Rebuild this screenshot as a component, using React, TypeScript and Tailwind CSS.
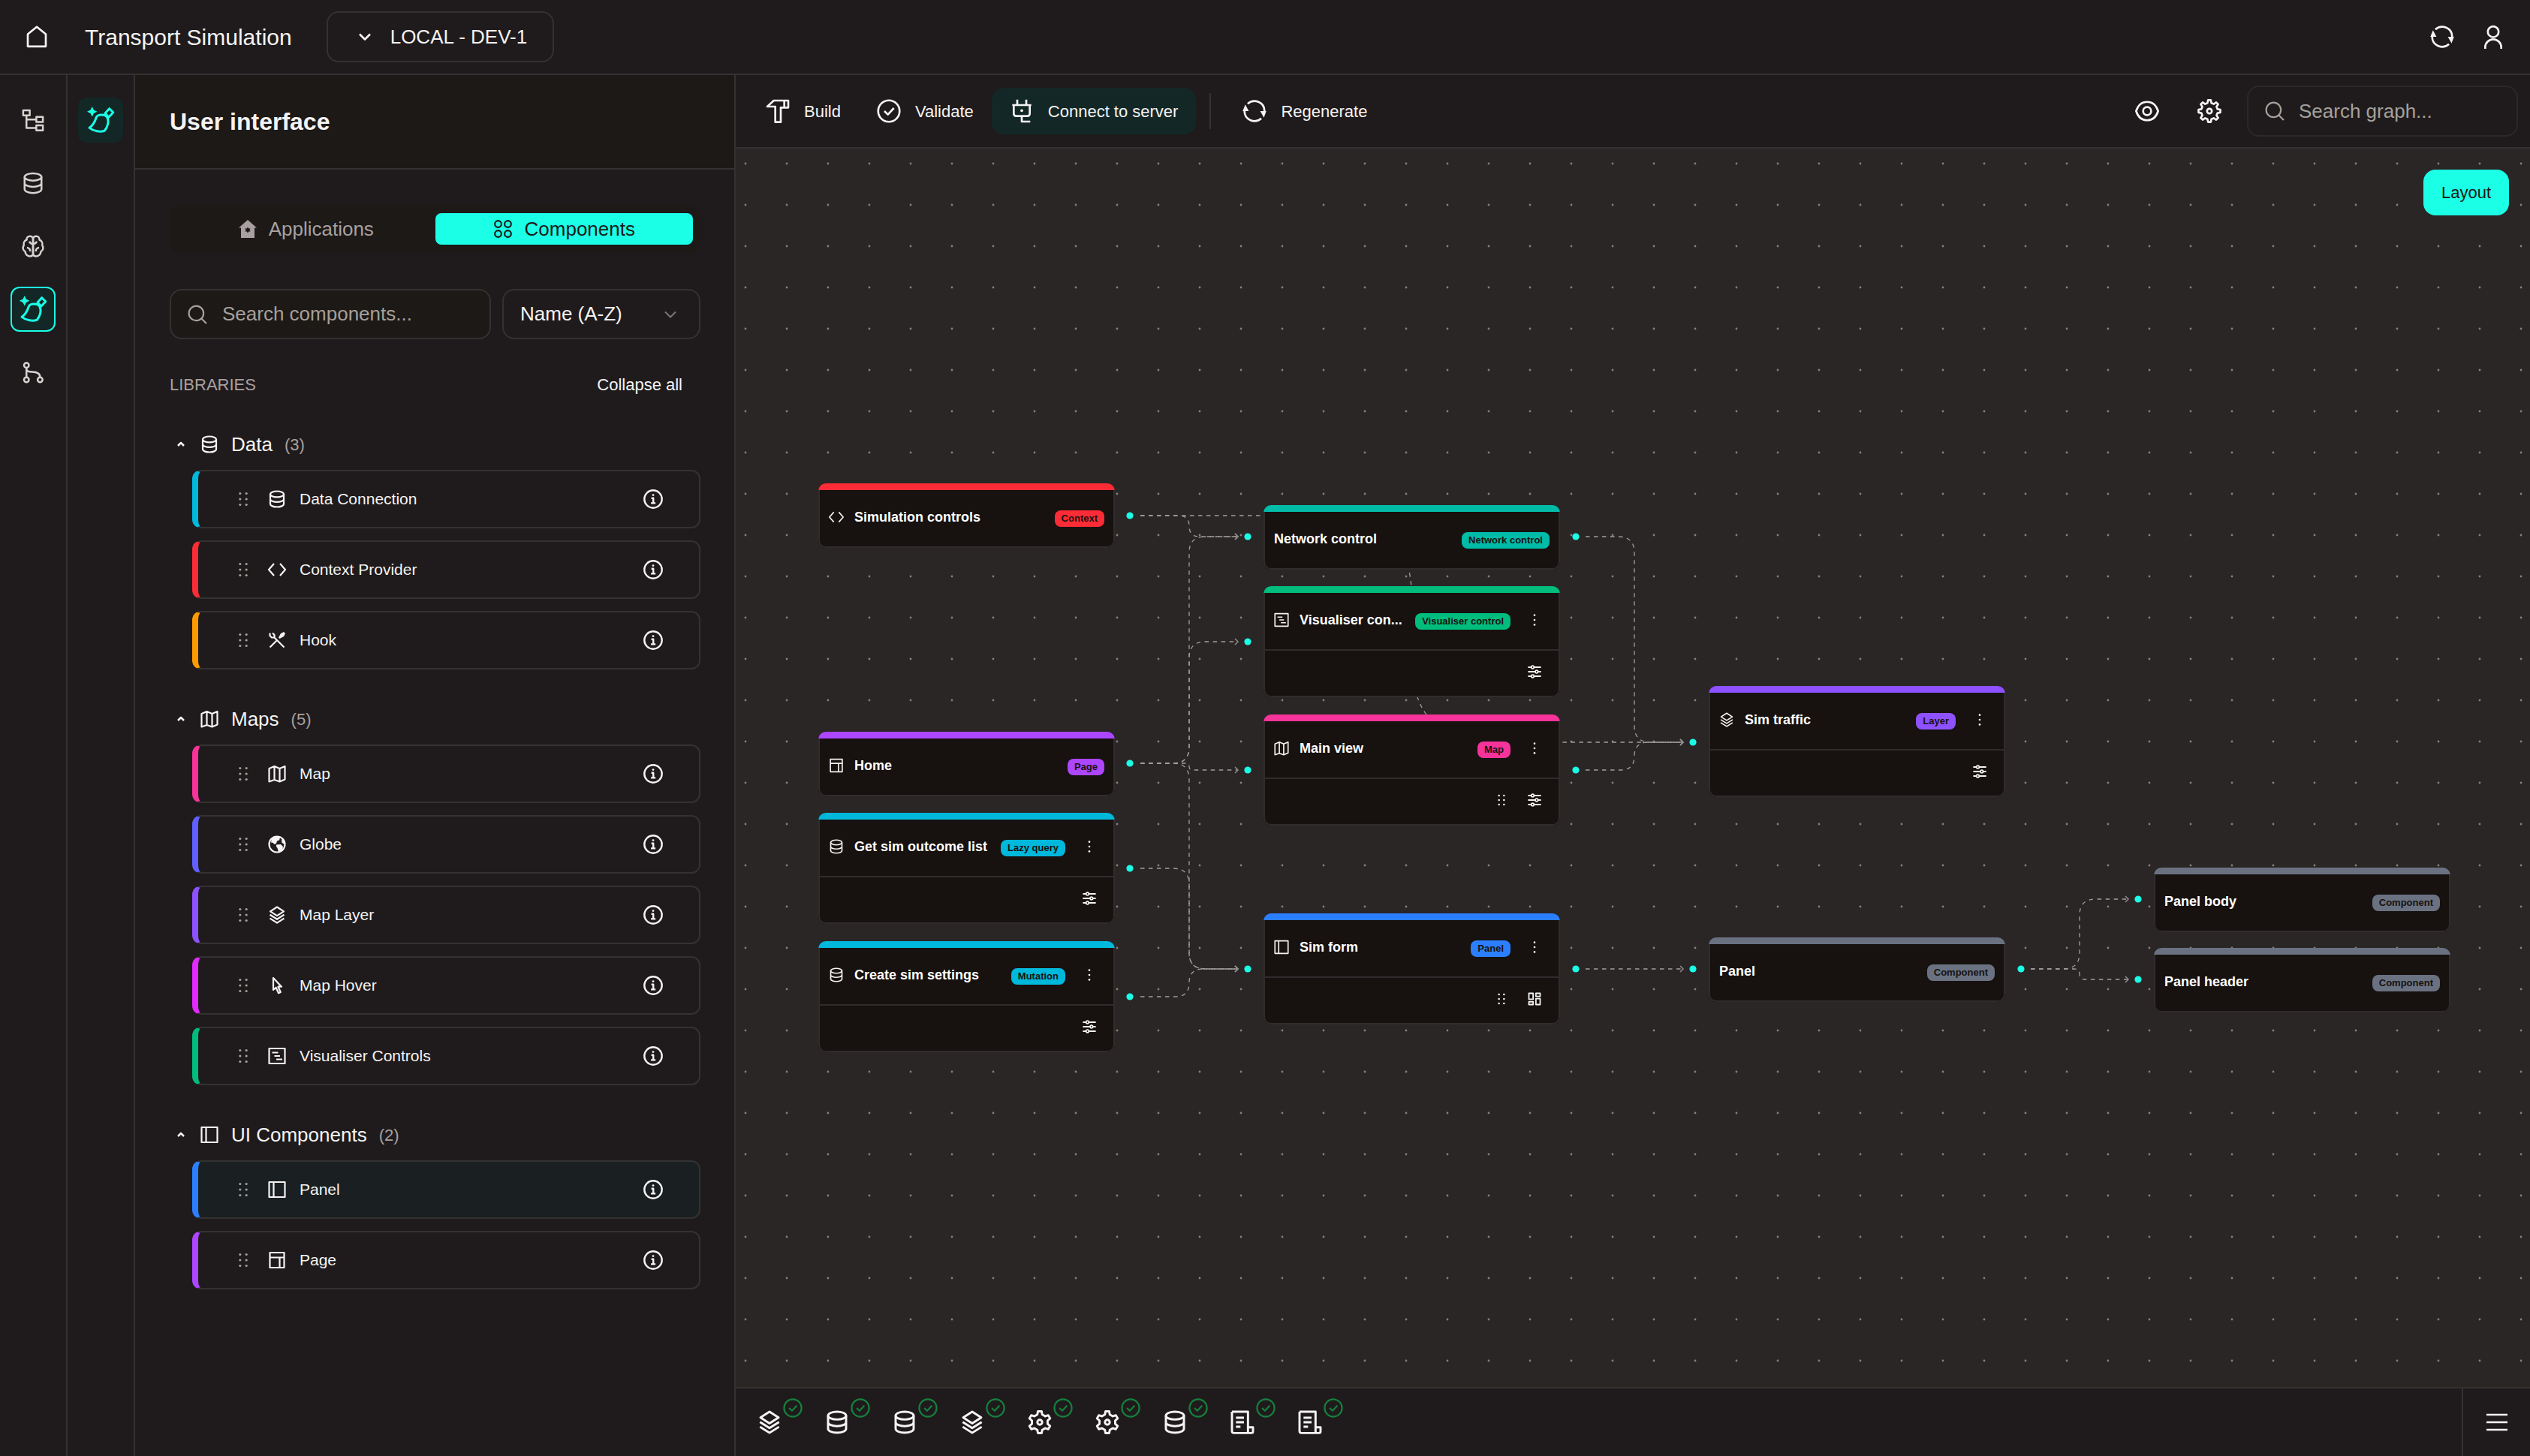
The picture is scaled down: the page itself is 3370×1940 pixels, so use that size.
import type { ReactNode } from "react";

// outline of a gear in a 24x24 box
function gearPath(teeth: number, outer: number, inner: number) {
  const step = (Math.PI * 2) / teeth;
  const at = (r: number, a: number) =>
    `${(12 + r * Math.sin(a)).toFixed(2)} ${(12 - r * Math.cos(a)).toFixed(2)}`;
  let d = "";
  for (let i = 0; i < teeth; i++) {
    const a = i * step;
    d += `${i === 0 ? "M" : "L"}${at(outer, a - step * 0.16)}`;
    d += `L${at(outer, a + step * 0.16)}L${at(inner, a + step * 0.3)}L${at(inner, a + step * 0.7)}`;
  }
  return d + "Z";
}

const brainHalf =
  "M12 4.5C12 2.500 13.500 1.300 15.300 1.300C17.500 1.300 19 3 18.800 5.200C21 6 22.500 8.300 21.800 11C23.500 13.500 22.800 16.500 20.300 17.800C20.300 20.800 18 22.700 15.500 22.700C13.500 22.700 12 21.500 12 19.500ZM12 9.500C14.200 9.500 15.500 8.500 15.800 6.800M15 17.500C15 15 16.500 13.800 18.500 13.500";

const icons = {
  home: <path d="M3 9.4 12 2l9 7.4V21.6H3Z" />,
  user: (
    <>
      <circle cx="12" cy="7" r="5.4" />
      <path d="M4 24v-1.500a8 8 0 0 1 16 0V24" />
    </>
  ),
  refresh: (
    <>
      <path d="M5.2 4.7A10 10 0 0 1 22 12M18.8 19.3A10 10 0 0 1 2 12" />
      <path d="M2.8 5.500 6.300 12H.2ZM21.4 18.500 17.700 12h6.100Z" fill="currentColor" stroke="none" />
    </>
  ),
  chevronDown: <path d="m5 8.5 7 7 7-7" />,
  chevronUp: <path d="m4 16 8-8 8 8" />,
  tree: <path d="M1.500 1.500h7v5.500h-7ZM15.500 8.500h7V14h-7ZM15.500 17.500h7V23h-7ZM5 7v13.300h10.500M5 11.300h10.500" />,
  brain: (
    <>
      <path d={brainHalf} />
      <path d={brainHalf} transform="matrix(-1 0 0 1 24 0)" />
    </>
  ),
  database: (
    <>
      <ellipse cx="12" cy="5.4" rx="9" ry="3.9" />
      <path d="M3 5.400v13.200c0 2.200 4 3.900 9 3.900s9-1.700 9-3.900V5.400M3 12c0 2.200 4 3.900 9 3.900s9-1.700 9-3.900" />
    </>
  ),
  brush: (
    <>
      <path d="M8.300 9.300C9.800 6.900 15.500 6.600 17.800 9.300c1.900 3.700.6 8.700-2.300 12.200C11.500 23 6 21.900 2 18.900c3-2 4.800-5 6.300-9.600ZM19.800 1.800l3.400 3.400-3.900 4.200-3.300-3.400Z" />
      <path d="M4.500 0 5.900 3 8.900 4.500 5.900 6 4.500 9 3 6 0 4.500 3 3Z" fill="currentColor" stroke="none" />
    </>
  ),
  git: (
    <>
      <circle cx="5" cy="4.500" r="2.600" />
      <circle cx="5" cy="20" r="2.600" />
      <circle cx="19.500" cy="20" r="2.600" />
      <path d="M5 7.100v10.300M5 8c0 3 2 3.500 6 3.500 5.500 0 8.500 1.500 8.500 5.900" />
    </>
  ),
  homeGear: (
    <path
      fillRule="evenodd"
      stroke="none"
      fill="currentColor"
      d="M12 0 24 10.500h-3V24H3V10.500H0ZM12 9.500l1.200 1.900 2.300-.1-1 2.100 1 2.100-2.300-.1L12 17.600l-1.200-2.200-2.300.1 1-2.100-1-2.100 2.300.1Z"
    />
  ),
  circles: (
    <>
      <circle cx="6" cy="6" r="4" />
      <circle cx="18" cy="6" r="4" />
      <circle cx="6" cy="18" r="4" />
      <circle cx="18" cy="18" r="4" />
    </>
  ),
  search: (
    <>
      <circle cx="10.500" cy="10.500" r="9" />
      <path d="m17 17 6 6" />
    </>
  ),
  code: <path d="M8 4 1 12l7 8M16 4l7 8-7 8" />,
  tools: (
    <>
      <path d="m8.500 8.500 13 13M2.500 2.500v3.500L5 8.500h3.500V5L6 2.500M2.500 21.500l9-9" />
      <path d="m14 8.500 3-5.500 4-2 2 2-2 4-5.500 3Z" fill="currentColor" stroke="none" />
    </>
  ),
  map: <path d="M1.500 5v17.500L8.500 20l7 2.500 7-3V2l-7 3-7-3ZM8.500 2v18M15.500 5v17.500" />,
  globe: (
    <>
      <circle cx="12" cy="12" r="10.500" />
      <path
        d="M5 4 12 1.500l4 1.500-1 3.500-3 1-1 3.500-3 1-1-2-3-.5ZM11 12.500l6-.5 3 3-1 5-5 2.500-1.500-5.500-1.500-2ZM18 5l3 2 1.500 5-4-2Z"
        fill="currentColor"
        stroke="none"
      />
    </>
  ),
  layers: (
    <path d="m12 1.500 9 5.800-9 5.800-9-5.800ZM2.500 11.800l9.500 6 9.500-6M2.500 16.600l9.500 6 9.500-6" />
  ),
  cursor: <path d="M7 2v16l3.600-3.300 3.400 7.500 2.800-1.200-3.300-7.300H18Z" />,
  visualiser: (
    <>
      <path d="M1.500 2h21v20h-21Z" />
      <path d="M5.500 7.500h8M8.500 12h7.500M11 16.500h8" />
    </>
  ),
  panel: <path d="M1.500 2h21v20h-21ZM7.500 2v20" />,
  page: <path d="M2.500 2h19v20h-19ZM2.500 8.500h19M15.500 8.500V22" />,
  info: (
    <>
      <circle cx="12" cy="12" r="10.800" />
      <path d="M9.800 10.800h2.400v6M9.300 17h5.600" />
      <circle cx="12" cy="7" r="1.300" fill="currentColor" stroke="none" />
    </>
  ),
  grip: (
    <g fill="currentColor" stroke="none">
      <circle cx="7" cy="3" r="1.900" />
      <circle cx="17" cy="3" r="1.900" />
      <circle cx="7" cy="12" r="1.900" />
      <circle cx="17" cy="12" r="1.900" />
      <circle cx="7" cy="21" r="1.900" />
      <circle cx="17" cy="21" r="1.900" />
    </g>
  ),
  more: (
    <g fill="currentColor" stroke="none">
      <circle cx="12" cy="3.500" r="1.800" />
      <circle cx="12" cy="12" r="1.800" />
      <circle cx="12" cy="20.500" r="1.800" />
    </g>
  ),
  sliders: (
    <>
      <path d="M.5 4H6M11.500 4h12M.5 12h12.500M18.500 12h5M.5 20H6M11.500 20h12" />
      <circle cx="8.700" cy="4" r="2.400" />
      <circle cx="15.700" cy="12" r="2.400" />
      <circle cx="8.700" cy="20" r="2.400" />
    </>
  ),
  blocks: (
    <path d="M2 2h7.500v10.500H2ZM14.500 2H22v5.500h-7.500ZM2 17h7.500v5H2ZM14.500 11.500H22V22h-7.500Z" />
  ),
  hammer: <path d="M1.500 7.500 8 1.500h14.500v7h-7.500V23H9.500V7.500ZM18.500 1.500v7" />,
  check: (
    <>
      <circle cx="12" cy="12" r="10.700" />
      <path d="m7.500 12 3.500 3.500 6-6.500" />
    </>
  ),
  plug: (
    <>
      <path d="M7.500.5V6M16.500.5V6M2.500 6h19M4 6v8.500c0 1.500 1 2.500 2.500 2.500h11c1.500 0 2.500-1 2.500-2.500V6M12 17v5.500h8.500" />
      <circle cx="12" cy="11.500" r="1.400" fill="currentColor" stroke="none" />
    </>
  ),
  eye: (
    <>
      <path d="M1 12C3 5.800 7 2.800 12 2.800S21 5.800 23 12c-2 6.200-6 9.200-11 9.200S3 18.200 1 12Z" />
      <circle cx="12" cy="12" r="4" />
    </>
  ),
  gear: (
    <>
      <path d={gearPath(8, 11, 8.300)} />
      <circle cx="12" cy="12" r="2.400" />
    </>
  ),
  cog: (
    <>
      <path d={gearPath(6, 11, 8)} />
      <circle cx="12" cy="12" r="2.400" />
    </>
  ),
  script: (
    <path d="M1.500 1.500h16V22c0 .6 0 .8.500.8h3c1 0 1.500-.8 1.500-1.800v-4h-5M18 22.800H3.500c-1.200 0-2-.8-2-2V1.500M5.500 7.500h8M5.500 12h8M5.500 16.500h4.500" />
  ),
  menu: <path d="M1.500 4.500h21M1.500 12h21M1.500 19.500h21" />,
};

type IconName = keyof typeof icons;

function Icon({
  name,
  className = "size-6",
  stroke = 2,
}: {
  name: IconName;
  className?: string;
  stroke?: number;
}) {
  return (
    <svg
      viewBox="0 0 24 24"
      className={`shrink-0 overflow-visible ${className}`}
      fill="none"
      stroke="currentColor"
      strokeWidth={stroke}
      strokeLinejoin="round"
      aria-hidden="true"
    >
      {icons[name]}
    </svg>
  );
}

interface LibraryItem {
  label: string;
  icon: IconName;
  accent: string;
  active?: boolean;
}

const libraries: { title: string; icon: IconName; items: LibraryItem[] }[] = [
  {
    title: "Data",
    icon: "database",
    items: [
      { label: "Data Connection", icon: "database", accent: "border-l-[#00b8db]" },
      { label: "Context Provider", icon: "code", accent: "border-l-[#fb2c36]" },
      { label: "Hook", icon: "tools", accent: "border-l-[#fe9a00]" },
    ],
  },
  {
    title: "Maps",
    icon: "map",
    items: [
      { label: "Map", icon: "map", accent: "border-l-[#f6339a]" },
      { label: "Globe", icon: "globe", accent: "border-l-[#615fff]" },
      { label: "Map Layer", icon: "layers", accent: "border-l-[#8e51ff]" },
      { label: "Map Hover", icon: "cursor", accent: "border-l-[#e12afb]" },
      { label: "Visualiser Controls", icon: "visualiser", accent: "border-l-[#00bc7d]" },
    ],
  },
  {
    title: "UI Components",
    icon: "panel",
    items: [
      { label: "Panel", icon: "panel", accent: "border-l-[#2b7fff]", active: true },
      { label: "Page", icon: "page", accent: "border-l-[#ad46ff]" },
    ],
  },
];

const nodeColors = {
  red: "bg-[#fb2c36]",
  purple: "bg-[#ad46ff]",
  cyan: "bg-[#00b8db]",
  teal: "bg-[#00bba7]",
  green: "bg-[#00bc7d]",
  pink: "bg-[#f6339a]",
  blue: "bg-[#2b7fff]",
  violet: "bg-[#8e51ff]",
  gray: "bg-[#6a7282]",
};

interface GraphNodeProps {
  x: number;
  y: number;
  title: string;
  badge: string;
  color: keyof typeof nodeColors;
  icon?: IconName;
  actions?: IconName[];
}

const nodes: GraphNodeProps[] = [
  { x: 110, y: 446, title: "Simulation controls", badge: "Context", color: "red", icon: "code" },
  { x: 110, y: 777, title: "Home", badge: "Page", color: "purple", icon: "page" },
  { x: 110, y: 885, title: "Get sim outcome list", badge: "Lazy query", color: "cyan", icon: "database", actions: ["sliders"] },
  { x: 110, y: 1056, title: "Create sim settings", badge: "Mutation", color: "cyan", icon: "database", actions: ["sliders"] },
  { x: 703, y: 475, title: "Network control", badge: "Network control", color: "teal" },
  { x: 703, y: 583, title: "Visualiser con...", badge: "Visualiser control", color: "green", icon: "visualiser", actions: ["sliders"] },
  { x: 703, y: 754, title: "Main view", badge: "Map", color: "pink", icon: "map", actions: ["grip", "sliders"] },
  { x: 703, y: 1019, title: "Sim form", badge: "Panel", color: "blue", icon: "panel", actions: ["grip", "blocks"] },
  { x: 1296, y: 716, title: "Sim traffic", badge: "Layer", color: "violet", icon: "layers", actions: ["sliders"] },
  { x: 1296, y: 1051, title: "Panel", badge: "Component", color: "gray" },
  { x: 1889, y: 958, title: "Panel body", badge: "Component", color: "gray" },
  { x: 1889, y: 1065, title: "Panel header", badge: "Component", color: "gray" },
];

// [source x, source y, target x, target y]
const edges = [
  [539, 489, 669, 517],
  [539, 489, 1262, 791],
  [539, 819, 669, 517],
  [539, 819, 669, 657],
  [539, 819, 669, 828],
  [539, 819, 669, 1093],
  [539, 959, 669, 1093],
  [539, 1130, 669, 1093],
  [1132, 517, 1262, 791],
  [1132, 828, 1262, 791],
  [1132, 1093, 1262, 1093],
  [1725, 1093, 1855, 1000],
  [1725, 1093, 1855, 1107],
];

const ports = [
  [525, 489], [525, 819], [525, 959], [525, 1130],
  [682, 517], [682, 657], [682, 828], [682, 1093],
  [1119, 517], [1119, 828], [1119, 1093],
  [1275, 791], [1275, 1093], [1712, 1093],
  [1868, 1000], [1868, 1107],
];

function edgePath([sx, sy, tx, ty]: number[]) {
  if (sy === ty) return `M${sx} ${sy}H${tx}`;
  const mid = (sx + tx) / 2;
  const r = Math.min(110, Math.abs(ty - sy) / 2, (mid - sx - 22) / 2);
  const dy = ty > sy ? r : -r;
  return `M${sx} ${sy}H${mid - r}Q${mid} ${sy} ${mid} ${sy + dy}V${ty - dy}Q${mid} ${ty} ${mid + r} ${ty}H${tx}`;
}

function GraphNode({ x, y, title, badge, color, icon, actions }: GraphNodeProps) {
  const accent = nodeColors[color];

  return (
    <article
      className="absolute w-[395px] overflow-hidden rounded-[10px] bg-[#17110f]"
      style={{ left: x, top: y }}
    >
      <div className={`h-[9px] ${accent}`} />
      <div className="rounded-b-[10px] border-x-2 border-b-2 border-[#302c2e]">
        <div className="flex h-[75px] items-center pr-3 pl-3">
          {icon && (
            <span className="mr-3.5 pb-1">
              <Icon name={icon} className="size-5" />
            </span>
          )}
          <h3 className="min-w-0 flex-1 truncate pb-1 text-[18px] leading-6 font-bold text-white">
            {title}
          </h3>
          <span
            className={`ml-2 h-[22px] rounded-lg px-[9px] text-[13px] leading-[22px] font-bold whitespace-nowrap text-[#17110f] ${accent}`}
          >
            {badge}
          </span>
          {actions && (
            <button type="button" aria-label="Node menu" className="ml-3 flex w-10 justify-center pb-1">
              <Icon name="more" className="size-[18px]" />
            </button>
          )}
        </div>
        {actions && (
          <div className="flex h-[62px] items-center justify-end gap-1 border-t-2 border-[#302c2e] pr-3 pb-1">
            {actions.map((action) => (
              <button key={action} type="button" aria-label={action} className="flex w-10 justify-center">
                <Icon
                  name={action}
                  className={action === "grip" ? "size-4" : "size-[18px]"}
                  stroke={2.4}
                />
              </button>
            ))}
          </div>
        )}
      </div>
    </article>
  );
}

function Graph() {
  return (
    <section className="relative min-h-[1240px] flex-1 overflow-hidden bg-[#2a2625]">
      <svg className="absolute inset-0 size-full" aria-hidden="true">
        <defs>
          <pattern id="dots" x="-15" y="-8" width="55" height="55" patternUnits="userSpaceOnUse">
            <circle cx="28" cy="28" r="1.4" fill="#85807d" />
          </pattern>
          <marker
            id="arrow"
            viewBox="-6 -6 12 12"
            markerWidth="12"
            markerHeight="12"
            markerUnits="userSpaceOnUse"
            orient="auto"
          >
            <path d="M-4-4 0 0-4 4" fill="none" stroke="#8f8b8d" strokeWidth="1.500" />
          </marker>
        </defs>
        <rect width="100%" height="100%" fill="url(#dots)" />
        {edges.map((edge) => (
          <path
            key={edge.join()}
            d={edgePath(edge)}
            fill="none"
            stroke="#a29e9f"
            strokeWidth="1.300"
            strokeDasharray="5.500"
            markerEnd="url(#arrow)"
          />
        ))}
        {ports.map(([cx, cy]) => (
          <circle key={`${cx}-${cy}`} cx={cx} cy={cy} r="4.600" fill="#1affe6" />
        ))}
      </svg>
      {nodes.map((node) => (
        <GraphNode key={node.title} {...node} />
      ))}
      <button
        type="button"
        className="absolute top-7 right-7 h-[61px] rounded-2xl bg-[#1affe6] px-6 text-[22px] text-[#1c1917]"
      >
        Layout
      </button>
    </section>
  );
}

function ToolbarButton({
  icon,
  children,
  active,
}: {
  icon: IconName;
  children: ReactNode;
  active?: boolean;
}) {
  return (
    <button
      type="button"
      className={`flex h-[62px] items-center gap-[19px] rounded-2xl px-6 text-[22px] ${active ? "bg-[#132826]" : ""}`}
    >
      <Icon name={icon} className="size-8" />
      {children}
    </button>
  );
}

function LibraryCard({ label, icon, accent, active }: LibraryItem) {
  return (
    <li
      className={`flex h-[78px] items-center rounded-xl border-2 border-l-8 border-[#343132] pr-12 pl-[50px] ${accent} ${active ? "bg-[#1a2021]" : ""}`}
    >
      <Icon name="grip" className="size-5 text-[#a6a09b]" />
      <Icon name={icon} className="mr-[18px] ml-[23px] size-6" stroke={2.2} />
      <span className="flex-1 text-[21px]">{label}</span>
      <button type="button" aria-label={`About ${label}`}>
        <Icon name="info" className="size-[26px]" stroke={2.2} />
      </button>
    </li>
  );
}

function Sidebar() {
  return (
    <aside className="w-[800px] shrink-0 border-r-2 border-[#343132]">
      <div className="flex h-[126px] items-center border-b-2 border-[#343132] bg-[#1c1917] pl-[46px]">
        <h2 className="text-[32px] font-bold">User interface</h2>
      </div>
      <div className="pt-[47px] pr-[45px] pb-12 pl-[46px]">
        <div className="grid grid-cols-2 rounded-2xl bg-[#1c1917] px-2.5 py-[11px] text-[26px]">
          <button type="button" className="flex h-[42px] items-center justify-center gap-4 text-[#a8a0a0]">
            <Icon name="homeGear" className="size-6" />
            Applications
          </button>
          <button
            type="button"
            className="flex h-[42px] items-center justify-center gap-4 rounded-lg bg-[#1affe6] text-[#1c1917]"
          >
            <Icon name="circles" className="size-[26px]" />
            Components
          </button>
        </div>

        <div className="mt-12 flex h-[67px] gap-[15px] text-[26px]">
          <label className="flex flex-1 items-center rounded-2xl border-2 border-[#343132] bg-[#1c1917] px-[22px]">
            <Icon name="search" className="mr-5 size-[26px] text-[#a8a0a0]" />
            <input
              type="text"
              aria-label="Search components"
              placeholder="Search components..."
              className="w-full min-w-0 bg-transparent outline-none placeholder:text-[#a6a09b]"
            />
          </label>
          <div className="relative w-[264px]">
            <select
              aria-label="Sort components"
              className="size-full appearance-none rounded-2xl border-2 border-[#343132] bg-transparent pl-[22px]"
            >
              <option>Name (A-Z)</option>
            </select>
            <span className="pointer-events-none absolute inset-y-0 right-7 flex items-center">
              <Icon name="chevronDown" className="size-6 text-[#7b7576]" />
            </span>
          </div>
        </div>

        <div className="mt-10 flex h-10 items-center justify-between pr-6 text-[22px]">
          <span className="text-[#a8a0a0]">LIBRARIES</span>
          <button type="button">Collapse all</button>
        </div>

        <div className="mt-10 flex flex-col gap-[46px]">
          {libraries.map((library) => (
            <section key={library.title}>
              <button type="button" className="flex h-10 items-center pl-[9px] text-[26px]">
                <Icon name="chevronUp" className="mr-5 size-3" stroke={5} />
                <Icon name={library.icon} className="mr-[17px] size-6" stroke={2.2} />
                {library.title}
                <span className="ml-4 text-[22px] text-[#a8a0a0]">({library.items.length})</span>
              </button>
              <ul className="mt-3.5 ml-[30px] flex flex-col gap-4">
                {library.items.map((item) => (
                  <LibraryCard key={item.label} {...item} />
                ))}
              </ul>
            </section>
          ))}
        </div>
      </div>
    </aside>
  );
}

const railItems: { label: string; icon: IconName; active?: boolean }[] = [
  { label: "Structure", icon: "tree" },
  { label: "Data", icon: "database" },
  { label: "Intelligence", icon: "brain" },
  { label: "Interface", icon: "brush", active: true },
  { label: "Versions", icon: "git" },
];

const statusIcons: IconName[] = [
  "layers",
  "database",
  "database",
  "layers",
  "cog",
  "cog",
  "database",
  "script",
  "script",
];

export default function App() {
  return (
    <div className="flex min-h-screen flex-col bg-[#1f1b1c] font-['Liberation_Sans',Arial,sans-serif] text-[#f5f3f3]">
      <header className="flex h-[100px] shrink-0 items-center border-b-2 border-[#343132] pr-[33px] pl-[33px]">
        <a href="#" aria-label="Home">
          <Icon name="home" className="size-8" />
        </a>
        <h1 className="ml-12 text-[30px]">Transport Simulation</h1>
        <button
          type="button"
          className="ml-[46px] flex h-[68px] items-center gap-[22px] rounded-2xl border-2 border-[#343132] pr-[34px] pl-[37px] text-[26px]"
        >
          <Icon name="chevronDown" className="size-6" stroke={2.6} />
          LOCAL - DEV-1
        </button>
        <div className="ml-auto flex items-center gap-9">
          <button type="button" aria-label="Refresh">
            <Icon name="refresh" className="size-8" />
          </button>
          <button type="button" aria-label="Account">
            <Icon name="user" className="size-8" />
          </button>
        </div>
      </header>

      <div className="flex flex-1">
        <nav className="flex w-[90px] shrink-0 flex-col items-center gap-6 border-r-2 border-[#343132] pt-[30px]">
          {railItems.map(({ label, icon, active }) => (
            <button
              key={label}
              type="button"
              aria-label={label}
              className={`flex size-[60px] items-center justify-center rounded-xl ${active ? "border-2 border-[#1affe6] bg-[#132826] text-[#1affe6]" : "text-[#d6d3d1]"}`}
            >
              <Icon name={icon} className={active ? "size-9" : "size-[30px]"} />
            </button>
          ))}
        </nav>
        <nav className="flex w-[90px] shrink-0 flex-col items-center border-r-2 border-[#343132] pt-[30px]">
          <button
            type="button"
            aria-label="User interface"
            className="flex size-[60px] items-center justify-center rounded-xl bg-[#132826] text-[#1affe6]"
          >
            <Icon name="brush" className="size-9" />
          </button>
        </nav>

        <Sidebar />

        <main className="flex min-w-0 flex-1 flex-col">
          <div className="flex h-[98px] shrink-0 items-center border-b-2 border-[#343132] pr-4 pl-4">
            <ToolbarButton icon="hammer">Build</ToolbarButton>
            <ToolbarButton icon="check">Validate</ToolbarButton>
            <ToolbarButton icon="plug" active>
              Connect to server
            </ToolbarButton>
            <div className="mx-[18px] h-12 w-0.5 bg-[#343132]" />
            <ToolbarButton icon="refresh">Regenerate</ToolbarButton>
            <div className="ml-auto flex items-center">
              <button type="button" aria-label="Visibility" className="mr-[51px]">
                <Icon name="eye" className="size-8" />
              </button>
              <button type="button" aria-label="Settings" className="mr-[34px]">
                <Icon name="gear" className="size-8" />
              </button>
              <label className="flex h-[68px] w-[361px] items-center rounded-2xl border-2 border-[#2c2829] px-[22px] text-[26px]">
                <Icon name="search" className="mr-[19px] size-[26px] text-[#a6a09b]" />
                <input
                  type="text"
                  aria-label="Search graph"
                  placeholder="Search graph..."
                  className="w-full min-w-0 bg-transparent outline-none placeholder:text-[#a6a09b]"
                />
              </label>
            </div>
          </div>

          <Graph />

          <footer className="flex h-[92px] shrink-0 border-t-2 border-[#343132]">
            <div className="flex flex-1 items-center gap-[58px] pl-[29px]">
              {statusIcons.map((icon, i) => (
                <button key={i} type="button" aria-label={`Task ${i + 1}`} className="relative">
                  <Icon name={icon} className="size-8" stroke={2.2} />
                  <span className="absolute -top-4 -right-7 text-[#15803d]">
                    <Icon name="check" className="size-[26px]" />
                  </span>
                </button>
              ))}
            </div>
            <button
              type="button"
              aria-label="Open panel"
              className="flex w-[91px] items-center justify-center border-l-2 border-[#343132]"
            >
              <Icon name="menu" className="size-8" />
            </button>
          </footer>
        </main>
      </div>
    </div>
  );
}
